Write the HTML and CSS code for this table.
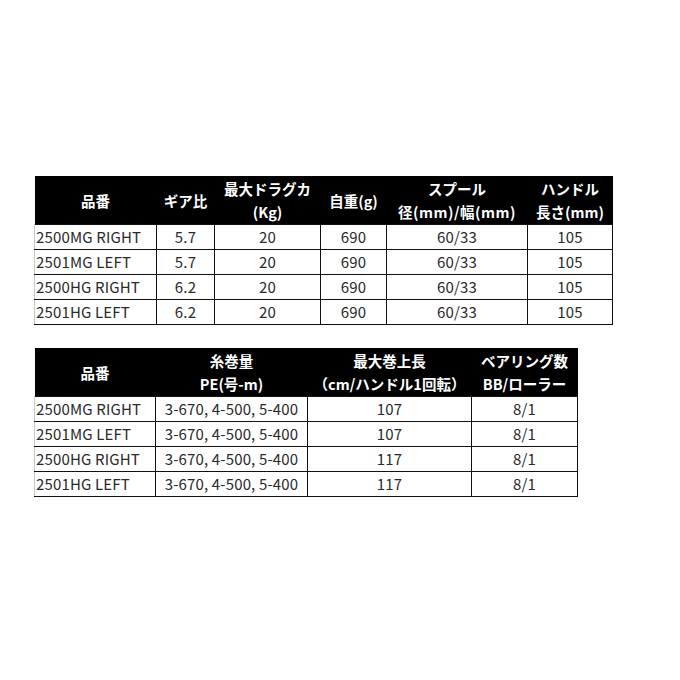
FILE: index.html
```html
<!DOCTYPE html>
<html lang="ja">
<head>
<meta charset="utf-8">
<link rel="stylesheet" href="styles.css">
</head>
<body>
<div class="page">
  <table class="spec spec-a">
    <colgroup>
      <col class="a1"><col class="a2"><col class="a3"><col class="a4"><col class="a5"><col class="a6">
    </colgroup>
    <thead>
      <tr>
        <th>品番</th>
        <th>ギア比</th>
        <th>最大ドラグカ<br>(Kg)</th>
        <th>自重(g)</th>
        <th>スプール<br><span class="wide">径(mm)/幅(mm)</span></th>
        <th>ハンドル<br>長さ(mm)</th>
      </tr>
    </thead>
    <tbody>
      <tr><td class="name">2500MG RIGHT</td><td>5.7</td><td>20</td><td>690</td><td>60/33</td><td>105</td></tr>
      <tr><td class="name">2501MG LEFT</td><td>5.7</td><td>20</td><td>690</td><td>60/33</td><td>105</td></tr>
      <tr><td class="name">2500HG RIGHT</td><td>6.2</td><td>20</td><td>690</td><td>60/33</td><td>105</td></tr>
      <tr><td class="name">2501HG LEFT</td><td>6.2</td><td>20</td><td>690</td><td>60/33</td><td>105</td></tr>
    </tbody>
  </table>

  <table class="spec spec-b">
    <colgroup>
      <col class="b1"><col class="b2"><col class="b3"><col class="b4">
    </colgroup>
    <thead>
      <tr>
        <th>品番</th>
        <th>糸巻量<br>PE(号-m)</th>
        <th>最大巻上長<br>（cm/ハンドル1回転）</th>
        <th>ベアリング数<br>BB/ローラー</th>
      </tr>
    </thead>
    <tbody>
      <tr><td class="name">2500MG RIGHT</td><td>3-670, 4-500, 5-400</td><td>107</td><td>8/1</td></tr>
      <tr><td class="name">2501MG LEFT</td><td>3-670, 4-500, 5-400</td><td>107</td><td>8/1</td></tr>
      <tr><td class="name">2500HG RIGHT</td><td>3-670, 4-500, 5-400</td><td>117</td><td>8/1</td></tr>
      <tr><td class="name">2501HG LEFT</td><td>3-670, 4-500, 5-400</td><td>117</td><td>8/1</td></tr>
    </tbody>
  </table>
</div>
</body>
</html>
```

FILE: styles.css
```css
html, body {
  margin: 0;
  padding: 0;
  background: #ffffff;
}

.page {
  padding: 176px 0 0 34px;
  display: flex;
  flex-direction: column;
  align-items: flex-start;
  gap: 23px;
  font-family: "Noto Sans CJK JP", "Noto Sans", sans-serif;
}

.spec {
  border-collapse: collapse;
  table-layout: fixed;
  color: #2a2a2a;
}

.spec-a { width: 578px; }
.spec-b { width: 543px; }

.a1 { width: 122px; }
.a2 { width: 58px; }
.a3 { width: 106px; }
.a4 { width: 66px; }
.a5 { width: 141px; }
.a6 { width: 85px; }

.b1 { width: 121px; }
.b2 { width: 152px; }
.b3 { width: 164px; }
.b4 { width: 106px; }

.spec th {
  background: #000000;
  color: #ffffff;
  font-weight: 700;
  font-size: 14.5px;
  line-height: 23px;
  height: 48px;
  padding: 0;
  text-align: center;
  vertical-align: middle;
  white-space: nowrap;
  border: none;
}

.spec th .wide {
  letter-spacing: 0.5px;
}

.spec td {
  border: 1px solid #111111;
  font-size: 15px;
  line-height: 24px;
  height: 24px;
  padding: 0;
  text-align: center;
  white-space: nowrap;
  font-weight: 400;
  letter-spacing: 0.15px;
}

.spec td.name {
  text-align: left;
  padding-left: 1px;
  border-left: 1px solid #c8c8c8;
}
```
